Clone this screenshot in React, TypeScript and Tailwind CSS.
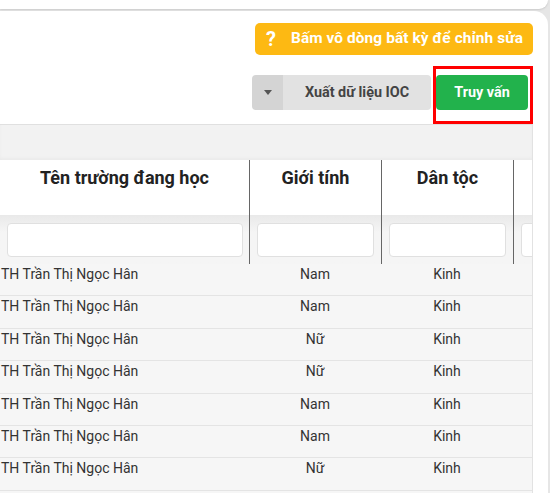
import { ChevronDown } from 'lucide-react'

const rows = [
  { school: 'TH Trần Thị Ngọc Hân', gender: 'Nam', ethnic: 'Kinh' },
  { school: 'TH Trần Thị Ngọc Hân', gender: 'Nam', ethnic: 'Kinh' },
  { school: 'TH Trần Thị Ngọc Hân', gender: 'Nữ', ethnic: 'Kinh' },
  { school: 'TH Trần Thị Ngọc Hân', gender: 'Nữ', ethnic: 'Kinh' },
  { school: 'TH Trần Thị Ngọc Hân', gender: 'Nam', ethnic: 'Kinh' },
  { school: 'TH Trần Thị Ngọc Hân', gender: 'Nam', ethnic: 'Kinh' },
  { school: 'TH Trần Thị Ngọc Hân', gender: 'Nữ', ethnic: 'Kinh' },
  { school: 'TH Trần Thị Ngọc Hân', gender: 'Nam', ethnic: 'Kinh' },
]

export default function App() {
  return (
    <div
      className="w-[550px] h-[493px] overflow-hidden bg-[#e6e6e6] text-[#333]"
      style={{ fontFamily: 'Roboto, "Noto Sans", sans-serif' }}
    >
      {/* Previous card (bottom edge) */}
      <div className="w-[548px] h-[9px] bg-white rounded-br-[14px] shadow-[0_1px_2px_rgba(0,0,0,0.12)]" />

      {/* Main card */}
      <div className="mt-[2px] w-[548px] h-[482px] bg-white rounded-tr-[14px] flex flex-col">
        {/* Hint banner */}
        <div className="flex justify-end pt-[12px] pr-[15px]">
          <div className="flex items-center h-[32px] w-[278px] rounded-[5px] bg-[#fdb913] text-white font-bold">
            <span className="ml-[11px] text-[20px] leading-none">?</span>
            <span className="ml-[15px] text-[15.4px] tracking-[0.1px]">Bấm vô dòng bất kỳ để chỉnh sửa</span>
          </div>
        </div>

        {/* Actions */}
        <div className="flex justify-end pt-[20px] pr-[20px]">
          <div className="flex h-[35px] w-[179px] rounded-[4px] overflow-hidden">
            <div className="w-[31px] bg-[#d4d4d4] flex items-center justify-center">
              <svg width="8" height="5" viewBox="0 0 8 5">
                <path d="M0 0h8L4 5z" fill="#555" />
              </svg>
            </div>
            <div className="flex-1 bg-[#e2e2e2] flex items-center justify-center text-[14.4px] font-bold text-[#444]">
              Xuất dữ liệu IOC
            </div>
          </div>
          <div className="relative ml-[5px]">
            <button className="h-[35px] w-[92px] rounded-[4px] bg-[#22b24c] text-white text-[14.4px] font-bold">
              Truy vấn
            </button>
            <div className="absolute -top-[9px] -left-[3px] -right-[5px] -bottom-[14px] border-[3px] border-[#ff0000]" />
          </div>
        </div>

        {/* Table */}
        <div className="mt-[14px] w-[533px] flex-1 overflow-hidden border-r border-[#e2e2e2]">
          <div className="h-[36px] bg-[#f2f2f2] border-t border-[#e0e0e0] shadow-[inset_0_-2px_3px_rgba(0,0,0,0.03)]" />

          <div className="w-[645px]">
            {/* Header */}
            <div className="grid grid-cols-[249px_132px_132px_132px] h-[55px] bg-white">
              {['Tên trường đang học', 'Giới tính', 'Dân tộc', ''].map((h, i) => (
                <div
                  key={i}
                  className={`pt-[5px] text-center text-[18px] leading-[26px] font-bold text-[#222] ${
                    i > 0 ? 'border-l border-[#666]' : ''
                  }`}
                >
                  {h}
                </div>
              ))}
            </div>

            {/* Filters */}
            <div className="grid grid-cols-[249px_132px_132px_132px] h-[49px] bg-gradient-to-b from-[#e9e9e9] to-[#f5f5f5] to-[35%]">
              {[0, 1, 2, 3].map((i) => (
                <div
                  key={i}
                  className={`pt-[8px] ${i > 0 ? 'border-l border-[#666] pl-[7px] pr-[7px]' : 'pl-[7px] pr-[6px]'}`}
                >
                  <div className="h-[34px] bg-white border border-[#e0e0e0] rounded-[4px]" />
                </div>
              ))}
            </div>

            {/* Rows */}
            {rows.map((r, i) => (
              <div
                key={i}
                className="grid grid-cols-[249px_132px_132px_132px] h-[32.4px] bg-[#f6f6f6] border-b border-[#e4e4e4] text-[14px] leading-[18px] text-[#333]"
              >
                <div className="pl-[1px] pt-[1px]">{r.school}</div>
                <div className="text-center pt-[1px]">{r.gender}</div>
                <div className="text-center pt-[1px]">{r.ethnic}</div>
                <div />
              </div>
            ))}
          </div>
        </div>
      </div>
    </div>
  )
}
